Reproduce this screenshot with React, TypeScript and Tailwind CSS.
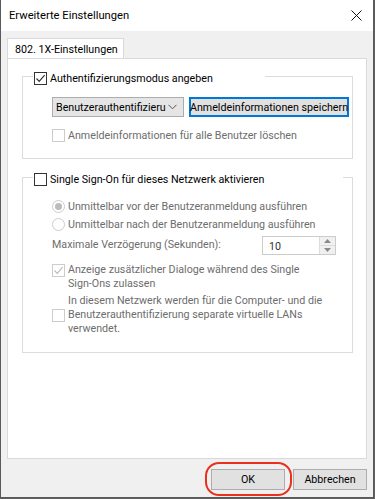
import React from "react";

const font = { fontFamily: 'Roboto, "Noto Sans", sans-serif' };

function CheckBox({ checked, disabled }: { checked?: boolean; disabled?: boolean }) {
  return (
    <span
      className={`relative flex h-[13px] w-[13px] shrink-0 items-center justify-center border bg-white ${
        disabled ? "border-[#cccccc]" : "border-[#333333]"
      }`}
    >
      {checked && (
        <svg width="11" height="11" viewBox="0 0 11 11" className="absolute">
          <path
            d="M1.5 5.5 L4.2 8.3 L9.6 2.2"
            fill="none"
            stroke={disabled ? "#bcbcbc" : "#333333"}
            strokeWidth="1.2"
          />
        </svg>
      )}
    </span>
  );
}

function Radio({ checked }: { checked?: boolean }) {
  return (
    <span className="flex h-[13px] w-[13px] shrink-0 items-center justify-center rounded-full border border-[#cccccc] bg-white">
      {checked && <span className="h-[7px] w-[7px] rounded-full bg-[#bcbcbc]" />}
    </span>
  );
}

export default function App() {
  return (
    <div className="h-[499px] w-[375px] bg-[#5f5f5f] text-[10.7px] leading-[15px] text-black" style={font}>
      <div className="flex h-[498px] w-[374px] flex-col border-b border-l border-r border-[#5a5a5a] bg-[#f0f0f0]">
        {/* title bar */}
        <div className="flex h-[31px] shrink-0 items-center justify-between bg-white pl-[8px] pr-[10px]">
          <span className="text-[11.2px] text-black">Erweiterte Einstellungen</span>
          <svg width="11" height="11" viewBox="0 0 11 11" className="mr-[1px]">
            <path d="M0.5 0.5 L10.5 10.5 M10.5 0.5 L0.5 10.5" stroke="#111" strokeWidth="1" />
          </svg>
        </div>

        {/* tabs */}
        <div className="flex flex-col px-[6px] pt-[7px]">
          <div className="flex">
            <div className="-mb-px flex h-[21px] w-[117px] items-center whitespace-nowrap border border-b-0 border-[#d9d9d9] bg-white pl-[7px]">
              802. 1X-Einstellungen
            </div>
          </div>
          <div className="flex h-[401px] w-[360px] flex-col gap-[18px] border border-[#d9d9d9] bg-white pl-[14px] pr-[13px] pt-[17px]">
            {/* group 1 */}
            <div className="relative h-[83px] border border-[#dcdcdc]">
              <div className="absolute left-[10px] top-[-5px] flex h-[13px] w-[232px] items-center gap-[3px] whitespace-nowrap bg-white pl-[1px]">
                <CheckBox checked />
                <span>Authentifizierungsmodus angeben</span>
              </div>
              <div className="flex flex-col gap-[11px] pl-[29px] pt-[20px]">
                <div className="flex gap-[5px]">
                  <div className="flex h-[20px] w-[132px] items-center justify-between overflow-hidden border border-[#adadad] bg-[#e5e5e5] pl-[3px] pr-[6px]">
                    <span className="w-[110px] overflow-hidden whitespace-nowrap">Benutzerauthentifizierung</span>
                    <svg width="9" height="6" viewBox="0 0 9 6">
                      <path d="M0.5 0.8 L4.5 4.8 L8.5 0.8" fill="none" stroke="#555" strokeWidth="1" />
                    </svg>
                  </div>
                  <div className="flex h-[20px] w-[160px] items-center justify-center whitespace-nowrap border-2 border-[#0078d7] bg-[#e1e1e1]">
                    Anmeldeinformationen speichern
                  </div>
                </div>
                <div className="flex items-center gap-[3px] whitespace-nowrap text-[#6d6d6d]">
                  <CheckBox disabled />
                  <span>Anmeldeinformationen für alle Benutzer löschen</span>
                </div>
              </div>
            </div>

            {/* group 2 */}
            <div className="relative h-[176px] border border-[#dcdcdc]">
              <div className="absolute left-[10px] top-[-5px] flex h-[13px] w-[310px] items-center gap-[3px] whitespace-nowrap bg-white pl-[1px]">
                <CheckBox />
                <span>Single Sign-On für dieses Netzwerk aktivieren</span>
              </div>
              <div className="flex flex-col whitespace-nowrap pl-[29px] pt-[22px] text-[#6d6d6d]">
                <div className="flex h-[13px] items-center gap-[3px]">
                  <Radio checked />
                  <span>Unmittelbar vor der Benutzeranmeldung ausführen</span>
                </div>
                <div className="mt-[5px] flex h-[13px] items-center gap-[3px]">
                  <Radio />
                  <span>Unmittelbar nach der Benutzeranmeldung ausführen</span>
                </div>
                <div className="mt-[5px] flex items-center justify-between pr-[16px]">
                  <span className="-mt-[3px]">Maximale Verzögerung (Sekunden):</span>
                  <div className="flex h-[19px] w-[74px] border border-[#cccccc] bg-white">
                    <span className="flex flex-1 items-center pl-[6px] pt-[1px] text-[#333333]">10</span>
                    <div className="flex w-[16px] flex-col border-l border-[#dcdcdc] bg-[#f0f0f0]">
                      <div className="flex flex-1 items-center justify-center border-b border-[#dcdcdc]">
                        <svg width="7" height="4" viewBox="0 0 7 4">
                          <path d="M0 4 L3.5 0 L7 4 Z" fill="#8a8a8a" />
                        </svg>
                      </div>
                      <div className="flex flex-1 items-center justify-center">
                        <svg width="7" height="4" viewBox="0 0 7 4">
                          <path d="M0 0 L3.5 4 L7 0 Z" fill="#8a8a8a" />
                        </svg>
                      </div>
                    </div>
                  </div>
                </div>
                <div className="mt-[8px] flex items-start gap-[3px] leading-[14px]">
                  <span className="pt-[1px]">
                    <CheckBox checked disabled />
                  </span>
                  <span>
                    Anzeige zusätzlicher Dialoge während des Single
                    <br />
                    Sign-Ons zulassen
                  </span>
                </div>
                <div className="mt-[3px] flex items-center gap-[3px] leading-[14px]">
                  <CheckBox disabled />
                  <span>
                    In diesem Netzwerk werden für die Computer- und die
                    <br />
                    Benutzerauthentifizierung separate virtuelle LANs
                    <br />
                    verwendet.
                  </span>
                </div>
              </div>
            </div>
          </div>
        </div>

        {/* buttons */}
        <div className="flex justify-end gap-[8px] pr-[6px] pt-[10px]">
          <div className="relative">
            <div className="flex h-[21px] w-[74px] items-center justify-center border border-[#adadad] bg-[#e1e1e1]">
              OK
            </div>
            <div className="absolute -bottom-[6px] -left-[6px] -right-[7px] -top-[7px] rounded-[14px] border-2 border-[#e8321e]" />
          </div>
          <div className="flex h-[21px] w-[74px] items-center justify-center border border-[#adadad] bg-[#e1e1e1]">
            Abbrechen
          </div>
        </div>
      </div>
    </div>
  );
}
